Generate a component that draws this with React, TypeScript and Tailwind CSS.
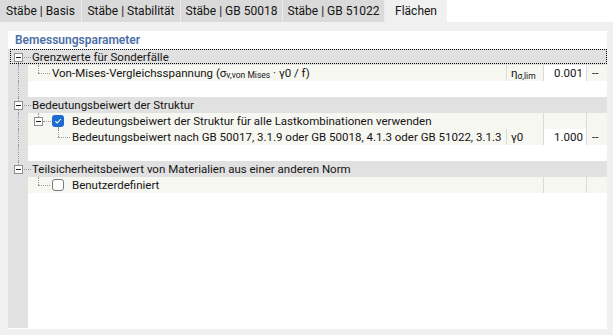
import React from "react";

const dotV = "absolute border-l border-dotted border-[#9a9a9a]";
const dotH = "absolute border-t border-dotted border-[#9a9a9a]";

function Minus() {
  return (
    <span className="flex h-[9px] w-[9px] shrink-0 items-center justify-center border border-[#8f8f8f] bg-white">
      <span className="h-px w-[5px] bg-[#1f1f1f]" />
    </span>
  );
}

function Header({
  text,
  focus,
  lineUp,
  lineDown,
}: {
  text: string;
  focus?: boolean;
  lineUp?: boolean;
  lineDown?: boolean;
}) {
  return (
    <div className="relative flex h-4 shrink-0 items-center bg-[#e1e1e1] pl-[6px]">
      {lineUp && <span className={`${dotV} left-[10px] top-0 h-[4px]`} />}
      {lineDown && <span className={`${dotV} left-[10px] top-[13px] bottom-0`} />}
      <Minus />
      <span className="ml-px w-[7px] border-t border-dotted border-[#9a9a9a]" />
      <span className="ml-px whitespace-nowrap leading-4">{text}</span>
      {focus && (
        <span className="pointer-events-none absolute bottom-px left-[2px] right-0 top-0 border border-dotted border-black" />
      )}
    </div>
  );
}

function Gutter({ line }: { line?: boolean }) {
  return (
    <div className="relative w-[20px] shrink-0 self-stretch bg-[#e1e1e1]">
      {line && <span className={`${dotV} left-[10px] top-0 bottom-0`} />}
    </div>
  );
}

function Cells({
  symbol,
  value,
  unit,
  showSymbol,
}: {
  symbol?: React.ReactNode;
  value?: string;
  unit?: string;
  showSymbol?: boolean;
}) {
  return (
    <>
      {showSymbol && (
        <div className="flex w-[37px] shrink-0 items-center border-l border-[#dadada] pl-[4px] leading-4">
          {symbol}
        </div>
      )}
      <div
        className={
          value
            ? "flex w-[43px] shrink-0 items-center justify-end border-l border-[#dadada] bg-white pr-[3px] leading-4"
            : "w-[43px] shrink-0 border-l border-[#dadada]"
        }
      >
        {value}
      </div>
      <div className="flex w-[21px] shrink-0 items-center border-l border-[#dadada] pl-[5px] leading-4">
        {unit}
      </div>
    </>
  );
}

function Checkbox({ checked }: { checked?: boolean }) {
  return checked ? (
    <span className="flex h-[12px] w-[12px] shrink-0 items-center justify-center rounded-[3px] bg-[#1d6bd0]">
      <svg width="8" height="8" viewBox="0 0 8 8">
        <path d="M1.3 4.2 L3.2 6 L6.8 2" fill="none" stroke="white" strokeWidth="1.1" />
      </svg>
    </span>
  ) : (
    <span className="h-[12px] w-[12px] shrink-0 rounded-[3px] border border-[#7a7a7a] bg-white" />
  );
}

function Blank({ line }: { line?: boolean }) {
  return (
    <div className="flex h-4 shrink-0">
      <Gutter line={line} />
      <div className="flex-1 bg-white" />
    </div>
  );
}

export default function App() {
  const tabs = [
    { t: "Stäbe | Basis", w: "w-[82px]" },
    { t: "Stäbe | Stabilität", w: "w-[99px]" },
    { t: "Stäbe | GB 50018", w: "w-[102px]" },
    { t: "Stäbe | GB 51022", w: "w-[102px]" },
  ];
  return (
    <div className="flex h-[335px] w-[613px] flex-col overflow-hidden bg-[#f0f0f0] font-['Roboto','Liberation_Sans',sans-serif] text-[12px] text-[#141414]">
      <div className="flex h-[22px] shrink-0 bg-white">
        {tabs.map((tab) => (
          <div
            key={tab.t}
            className={`${tab.w} flex shrink-0 items-center justify-center border-r border-[#ececec] bg-[#dadada] whitespace-nowrap`}
          >
            {tab.t}
          </div>
        ))}
        <div className="flex w-[62px] shrink-0 items-center justify-center bg-[#f0f0f0]">Flächen</div>
        <div className="flex-1 bg-white" />
      </div>
      <div className="flex flex-1 flex-col pb-[6px] pl-[8px] pr-[6px] pt-[9px]">
        <div className="flex flex-1 flex-col bg-white pb-px text-[11.5px]">
          <div className="flex h-[18px] shrink-0 items-center pl-[7px] text-[12px] font-semibold text-[#4b6ea6]">
            Bemessungsparameter
          </div>

          <Header text="Grenzwerte für Sonderfälle" focus lineDown />
          <div className="flex h-4 shrink-0">
            <Gutter line />
            <div className="relative flex min-w-0 flex-1 bg-[#f7f7f2]">
              <span className={`${dotV} left-[10px] top-0 h-[8px]`} />
              <span className={`${dotH} left-[10px] top-[8px] w-[12px]`} />
              <div className="flex min-w-0 flex-1 items-center overflow-hidden whitespace-nowrap pl-[24px] leading-4">
                Von-Mises-Vergleichsspannung (σ
                <span className="relative top-[2px] text-[8.5px]">v,von Mises</span>
                &nbsp;· γ0 / f)
              </div>
              <Cells
                showSymbol
                symbol={
                  <span className="whitespace-nowrap">
                    η<span className="relative top-[2px] text-[8.5px]">σ,lim</span>
                  </span>
                }
                value="0.001"
                unit="--"
              />
            </div>
          </div>
          <Blank line />

          <Header text="Bedeutungsbeiwert der Struktur" lineUp lineDown />
          <div className="flex h-4 shrink-0">
            <Gutter line />
            <div className="relative flex min-w-0 flex-1 bg-[#f7f7f2]">
              <span className={`${dotV} left-[10px] top-0 h-[4px]`} />
              <span className={`${dotH} left-[15px] top-[8px] w-[8px]`} />
              <span className={`${dotV} left-[30px] top-[14px] bottom-0`} />
              <div className="flex min-w-0 flex-1 items-center overflow-hidden whitespace-nowrap leading-4">
                <span className="ml-[6px]">
                  <Minus />
                </span>
                <span className="ml-[9px]">
                  <Checkbox checked />
                </span>
                <span className="ml-[8px]">
                  Bedeutungsbeiwert der Struktur für alle Lastkombinationen verwenden
                </span>
              </div>
              <Cells />
            </div>
          </div>
          <div className="flex h-4 shrink-0">
            <Gutter line />
            <div className="relative flex min-w-0 flex-1 bg-[#f7f7f2]">
              <span className={`${dotV} left-[30px] top-0 h-[8px]`} />
              <span className={`${dotH} left-[30px] top-[8px] w-[12px]`} />
              <div className="flex min-w-0 flex-1 items-center overflow-hidden whitespace-nowrap pl-[44px] leading-4">
                Bedeutungsbeiwert nach GB 50017, 3.1.9 oder GB 50018, 4.1.3 oder GB 51022, 3.1.3
              </div>
              <Cells showSymbol symbol={<span>γ0</span>} value="1.000" unit="--" />
            </div>
          </div>
          <Blank line />

          <Header text="Teilsicherheitsbeiwert von Materialien aus einer anderen Norm" lineUp />
          <div className="flex h-4 shrink-0">
            <Gutter />
            <div className="relative flex min-w-0 flex-1 bg-[#f7f7f2]">
              <span className={`${dotV} left-[10px] top-0 h-[8px]`} />
              <span className={`${dotH} left-[10px] top-[8px] w-[12px]`} />
              <div className="flex min-w-0 flex-1 items-center overflow-hidden whitespace-nowrap pl-[24px] leading-4">
                <Checkbox />
                <span className="ml-[8px]">Benutzerdefiniert</span>
              </div>
              <Cells />
            </div>
          </div>

          <div className="flex flex-1">
            <Gutter />
            <div className="flex-1 bg-white" />
          </div>
        </div>
      </div>
    </div>
  );
}
